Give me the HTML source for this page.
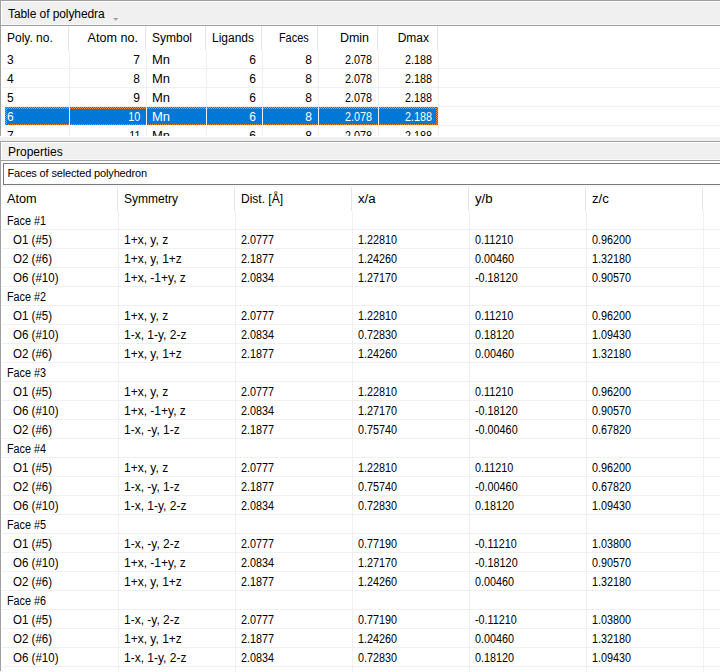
<!DOCTYPE html>
<html><head><meta charset="utf-8"><style>
html,body{margin:0;padding:0;width:720px;height:672px;overflow:hidden;background:#fff;}
body{position:relative;font-family:"Liberation Sans",sans-serif;font-size:12px;}
div{position:absolute;box-sizing:border-box;}
.t{line-height:19px;white-space:pre;font-size:12px;}
.s{line-height:19px;white-space:pre;font-size:11px;}
</style></head><body>

<div style="left:0px;top:0px;width:720px;height:136px;background:#fff;"></div>
<div style="left:0px;top:0px;width:720px;height:1px;background:#a0a0a0;"></div>
<div style="left:0px;top:0px;width:1px;height:136px;background:#a0a0a0;"></div>
<div style="left:1px;top:1px;width:719px;height:1px;background:#fff;"></div>
<div style="left:1px;top:1px;width:1px;height:24px;background:#fff;"></div>
<div style="left:2px;top:2px;width:718px;height:22px;background:#f0f0f0;"></div>
<div style="left:2px;top:24px;width:718px;height:1px;background:#f8f8f8;"></div>
<div style="left:1px;top:25px;width:719px;height:1px;background:#a0a0a0;"></div>
<div class="t" style="left:8px;top:5px;color:#000;letter-spacing:-0.08px;">Table of polyhedra</div>
<svg style="position:absolute;left:112px;top:17px" width="8" height="5"><path d="M1 1 L6.5 1 L3.75 3.75 Z" fill="#a0a0a0"/></svg>
<div style="left:68px;top:26px;width:1px;height:24px;background:#e5e5e5;"></div>
<div style="left:145px;top:26px;width:1px;height:24px;background:#e5e5e5;"></div>
<div style="left:205px;top:26px;width:1px;height:24px;background:#e5e5e5;"></div>
<div style="left:261px;top:26px;width:1px;height:24px;background:#e5e5e5;"></div>
<div style="left:317px;top:26px;width:1px;height:24px;background:#e5e5e5;"></div>
<div style="left:377px;top:26px;width:1px;height:24px;background:#e5e5e5;"></div>
<div style="left:437px;top:26px;width:1px;height:24px;background:#e5e5e5;"></div>
<div style="left:69px;top:50px;width:1px;height:86px;background:#f0f0f0;"></div>
<div style="left:146px;top:50px;width:1px;height:86px;background:#f0f0f0;"></div>
<div style="left:206px;top:50px;width:1px;height:86px;background:#f0f0f0;"></div>
<div style="left:262px;top:50px;width:1px;height:86px;background:#f0f0f0;"></div>
<div style="left:318px;top:50px;width:1px;height:86px;background:#f0f0f0;"></div>
<div style="left:378px;top:50px;width:1px;height:86px;background:#f0f0f0;"></div>
<div style="left:438px;top:50px;width:1px;height:86px;background:#f0f0f0;"></div>
<div style="left:2px;top:68px;width:718px;height:1px;background:#f0f0f0;"></div>
<div style="left:2px;top:87px;width:718px;height:1px;background:#f0f0f0;"></div>
<div style="left:2px;top:106px;width:718px;height:1px;background:#f0f0f0;"></div>
<div style="left:2px;top:125px;width:718px;height:1px;background:#f0f0f0;"></div>
<div class="t" style="left:7px;top:29px;color:#000;">Poly. no.</div>
<div class="t" style="right:582px;top:29px;color:#000;text-align:right;transform:scaleX(1.05);transform-origin:right center;">Atom no.</div>
<div class="t" style="left:152px;top:29px;color:#000;">Symbol</div>
<div class="t" style="right:466px;top:29px;color:#000;text-align:right;">Ligands</div>
<div class="t" style="right:411px;top:29px;color:#000;text-align:right;transform:scaleX(0.91);transform-origin:right center;">Faces</div>
<div class="t" style="right:351px;top:29px;color:#000;text-align:right;transform:scaleX(1.04);transform-origin:right center;">Dmin</div>
<div class="t" style="right:291px;top:29px;color:#000;text-align:right;">Dmax</div>
<div class="t" style="left:7px;top:51px;color:#000;">3</div>
<div class="t" style="right:580px;top:51px;color:#000;text-align:right;">7</div>
<div class="t" style="left:152px;top:51px;color:#000;transform:scaleX(1.08);transform-origin:left center;">Mn</div>
<div class="t" style="right:464px;top:51px;color:#000;text-align:right;">6</div>
<div class="t" style="right:408px;top:51px;color:#000;text-align:right;">8</div>
<div class="t" style="right:348px;top:51px;color:#000;text-align:right;transform:scaleX(0.9);transform-origin:right center;">2.078</div>
<div class="t" style="right:288px;top:51px;color:#000;text-align:right;transform:scaleX(0.9);transform-origin:right center;">2.188</div>
<div class="t" style="left:7px;top:70px;color:#000;">4</div>
<div class="t" style="right:580px;top:70px;color:#000;text-align:right;">8</div>
<div class="t" style="left:152px;top:70px;color:#000;transform:scaleX(1.08);transform-origin:left center;">Mn</div>
<div class="t" style="right:464px;top:70px;color:#000;text-align:right;">6</div>
<div class="t" style="right:408px;top:70px;color:#000;text-align:right;">8</div>
<div class="t" style="right:348px;top:70px;color:#000;text-align:right;transform:scaleX(0.9);transform-origin:right center;">2.078</div>
<div class="t" style="right:288px;top:70px;color:#000;text-align:right;transform:scaleX(0.9);transform-origin:right center;">2.188</div>
<div class="t" style="left:7px;top:89px;color:#000;">5</div>
<div class="t" style="right:580px;top:89px;color:#000;text-align:right;">9</div>
<div class="t" style="left:152px;top:89px;color:#000;transform:scaleX(1.08);transform-origin:left center;">Mn</div>
<div class="t" style="right:464px;top:89px;color:#000;text-align:right;">6</div>
<div class="t" style="right:408px;top:89px;color:#000;text-align:right;">8</div>
<div class="t" style="right:348px;top:89px;color:#000;text-align:right;transform:scaleX(0.9);transform-origin:right center;">2.078</div>
<div class="t" style="right:288px;top:89px;color:#000;text-align:right;transform:scaleX(0.9);transform-origin:right center;">2.188</div>
<div style="left:5px;top:107px;width:64px;height:18px;background:#0078d7;"></div>
<div style="left:70px;top:107px;width:76px;height:18px;background:#0078d7;"></div>
<div style="left:147px;top:107px;width:59px;height:18px;background:#0078d7;"></div>
<div style="left:207px;top:107px;width:55px;height:18px;background:#0078d7;"></div>
<div style="left:263px;top:107px;width:55px;height:18px;background:#0078d7;"></div>
<div style="left:319px;top:107px;width:59px;height:18px;background:#0078d7;"></div>
<div style="left:379px;top:107px;width:59px;height:18px;background:#0078d7;"></div>
<div style="left:5px;top:107px;width:64px;height:2px;background:#0078d7;background-image:repeating-conic-gradient(#ff8728 0 25%,#0078d7 0 50%);background-size:2px 2px;"></div>
<div style="left:5px;top:124px;width:64px;height:1px;background:#0078d7;background-image:repeating-conic-gradient(#ff8728 0 25%,#0078d7 0 50%);background-size:2px 2px;"></div>
<div style="left:70px;top:107px;width:76px;height:2px;background:#0078d7;background-image:repeating-conic-gradient(#ff8728 0 25%,#0078d7 0 50%);background-size:2px 2px;"></div>
<div style="left:70px;top:124px;width:76px;height:1px;background:#0078d7;background-image:repeating-conic-gradient(#ff8728 0 25%,#0078d7 0 50%);background-size:2px 2px;"></div>
<div style="left:147px;top:107px;width:59px;height:2px;background:#0078d7;background-image:repeating-conic-gradient(#ff8728 0 25%,#0078d7 0 50%);background-size:2px 2px;"></div>
<div style="left:147px;top:124px;width:59px;height:1px;background:#0078d7;background-image:repeating-conic-gradient(#ff8728 0 25%,#0078d7 0 50%);background-size:2px 2px;"></div>
<div style="left:207px;top:107px;width:55px;height:2px;background:#0078d7;background-image:repeating-conic-gradient(#ff8728 0 25%,#0078d7 0 50%);background-size:2px 2px;"></div>
<div style="left:207px;top:124px;width:55px;height:1px;background:#0078d7;background-image:repeating-conic-gradient(#ff8728 0 25%,#0078d7 0 50%);background-size:2px 2px;"></div>
<div style="left:263px;top:107px;width:55px;height:2px;background:#0078d7;background-image:repeating-conic-gradient(#ff8728 0 25%,#0078d7 0 50%);background-size:2px 2px;"></div>
<div style="left:263px;top:124px;width:55px;height:1px;background:#0078d7;background-image:repeating-conic-gradient(#ff8728 0 25%,#0078d7 0 50%);background-size:2px 2px;"></div>
<div style="left:319px;top:107px;width:59px;height:2px;background:#0078d7;background-image:repeating-conic-gradient(#ff8728 0 25%,#0078d7 0 50%);background-size:2px 2px;"></div>
<div style="left:319px;top:124px;width:59px;height:1px;background:#0078d7;background-image:repeating-conic-gradient(#ff8728 0 25%,#0078d7 0 50%);background-size:2px 2px;"></div>
<div style="left:379px;top:107px;width:59px;height:2px;background:#0078d7;background-image:repeating-conic-gradient(#ff8728 0 25%,#0078d7 0 50%);background-size:2px 2px;"></div>
<div style="left:379px;top:124px;width:59px;height:1px;background:#0078d7;background-image:repeating-conic-gradient(#ff8728 0 25%,#0078d7 0 50%);background-size:2px 2px;"></div>
<div style="left:5px;top:107px;width:2px;height:18px;background:#0078d7;background-image:repeating-conic-gradient(#ff8728 0 25%,#0078d7 0 50%);background-size:2px 2px;"></div>
<div style="left:436px;top:107px;width:2px;height:18px;background:#0078d7;background-image:repeating-conic-gradient(#ff8728 0 25%,#0078d7 0 50%);background-size:2px 2px;"></div>
<div class="t" style="left:7px;top:108px;color:#fff;">6</div>
<div class="t" style="right:580px;top:108px;color:#fff;text-align:right;transform:scaleX(0.9);transform-origin:right center;">10</div>
<div class="t" style="left:152px;top:108px;color:#fff;transform:scaleX(1.08);transform-origin:left center;">Mn</div>
<div class="t" style="right:464px;top:108px;color:#fff;text-align:right;">6</div>
<div class="t" style="right:408px;top:108px;color:#fff;text-align:right;">8</div>
<div class="t" style="right:348px;top:108px;color:#fff;text-align:right;transform:scaleX(0.9);transform-origin:right center;">2.078</div>
<div class="t" style="right:288px;top:108px;color:#fff;text-align:right;transform:scaleX(0.9);transform-origin:right center;">2.188</div>
<div class="t" style="left:7px;top:127px;color:#000;">7</div>
<div class="t" style="right:580px;top:127px;color:#000;text-align:right;transform:scaleX(0.9);transform-origin:right center;">11</div>
<div class="t" style="left:152px;top:127px;color:#000;transform:scaleX(1.08);transform-origin:left center;">Mn</div>
<div class="t" style="right:464px;top:127px;color:#000;text-align:right;">6</div>
<div class="t" style="right:408px;top:127px;color:#000;text-align:right;">8</div>
<div class="t" style="right:348px;top:127px;color:#000;text-align:right;transform:scaleX(0.9);transform-origin:right center;">2.078</div>
<div class="t" style="right:288px;top:127px;color:#000;text-align:right;transform:scaleX(0.9);transform-origin:right center;">2.188</div>
<div style="left:0px;top:136px;width:720px;height:1px;background:#fff;"></div>
<div style="left:0px;top:137px;width:720px;height:4px;background:#f0f0f0;"></div>
<div style="left:0px;top:141px;width:720px;height:1px;background:#a0a0a0;"></div>
<div style="left:0px;top:141px;width:1px;height:530px;background:#a0a0a0;"></div>
<div style="left:1px;top:142px;width:719px;height:1px;background:#fff;"></div>
<div style="left:1px;top:142px;width:1px;height:18px;background:#fff;"></div>
<div style="left:2px;top:143px;width:718px;height:16px;background:#f0f0f0;"></div>
<div style="left:2px;top:159px;width:718px;height:1px;background:#f8f8f8;"></div>
<div style="left:1px;top:160px;width:719px;height:1px;background:#a0a0a0;"></div>
<div class="t" style="left:8px;top:143px;color:#000;">Properties</div>
<div style="left:3px;top:163px;width:717px;height:22px;background:#fff;border:1px solid #7a7a7a;border-right:none;"></div>
<div class="s" style="left:7.5px;top:164px;color:#000;letter-spacing:-0.15px;">Faces of selected polyhedron</div>
<div style="left:1px;top:185px;width:719px;height:2px;background:#f8f8f8;"></div>
<div style="left:117px;top:187px;width:1px;height:24px;background:#e5e5e5;"></div>
<div style="left:234px;top:187px;width:1px;height:24px;background:#e5e5e5;"></div>
<div style="left:351px;top:187px;width:1px;height:24px;background:#e5e5e5;"></div>
<div style="left:468px;top:187px;width:1px;height:24px;background:#e5e5e5;"></div>
<div style="left:585px;top:187px;width:1px;height:24px;background:#e5e5e5;"></div>
<div style="left:702px;top:187px;width:1px;height:24px;background:#e5e5e5;"></div>
<div style="left:118px;top:211px;width:1px;height:461px;background:#f0f0f0;"></div>
<div style="left:235px;top:211px;width:1px;height:461px;background:#f0f0f0;"></div>
<div style="left:352px;top:211px;width:1px;height:461px;background:#f0f0f0;"></div>
<div style="left:469px;top:211px;width:1px;height:461px;background:#f0f0f0;"></div>
<div style="left:586px;top:211px;width:1px;height:461px;background:#f0f0f0;"></div>
<div style="left:703px;top:211px;width:1px;height:461px;background:#f0f0f0;"></div>
<div class="t" style="left:7px;top:190px;color:#000;transform:scaleX(1.06);transform-origin:left center;">Atom</div>
<div class="t" style="left:124px;top:190px;color:#000;">Symmetry</div>
<div class="t" style="left:241px;top:190px;color:#000;">Dist. [&#197;]</div>
<div class="t" style="left:358px;top:190px;color:#000;transform:scaleX(1.1);transform-origin:left center;">x/a</div>
<div class="t" style="left:475px;top:190px;color:#000;transform:scaleX(1.1);transform-origin:left center;">y/b</div>
<div class="t" style="left:592px;top:190px;color:#000;transform:scaleX(1.1);transform-origin:left center;">z/c</div>
<div style="left:2px;top:229px;width:718px;height:1px;background:#f0f0f0;"></div>
<div class="t" style="left:7px;top:212px;color:#000;transform:scaleX(0.9);transform-origin:left center;">Face #1</div>
<div style="left:2px;top:248px;width:718px;height:1px;background:#f0f0f0;"></div>
<div class="t" style="left:13px;top:231px;color:#000;transform:scaleX(0.96);transform-origin:left center;">O1 (#5)</div>
<div class="t" style="left:124px;top:231px;color:#000;">1+x, y, z</div>
<div class="t" style="left:241px;top:231px;color:#000;transform:scaleX(0.9);transform-origin:left center;">2.0777</div>
<div class="t" style="left:358px;top:231px;color:#000;transform:scaleX(0.9);transform-origin:left center;">1.22810</div>
<div class="t" style="left:475px;top:231px;color:#000;transform:scaleX(0.9);transform-origin:left center;">0.11210</div>
<div class="t" style="left:592px;top:231px;color:#000;transform:scaleX(0.9);transform-origin:left center;">0.96200</div>
<div style="left:2px;top:267px;width:718px;height:1px;background:#f0f0f0;"></div>
<div class="t" style="left:13px;top:250px;color:#000;transform:scaleX(0.96);transform-origin:left center;">O2 (#6)</div>
<div class="t" style="left:124px;top:250px;color:#000;">1+x, y, 1+z</div>
<div class="t" style="left:241px;top:250px;color:#000;transform:scaleX(0.9);transform-origin:left center;">2.1877</div>
<div class="t" style="left:358px;top:250px;color:#000;transform:scaleX(0.9);transform-origin:left center;">1.24260</div>
<div class="t" style="left:475px;top:250px;color:#000;transform:scaleX(0.9);transform-origin:left center;">0.00460</div>
<div class="t" style="left:592px;top:250px;color:#000;transform:scaleX(0.9);transform-origin:left center;">1.32180</div>
<div style="left:2px;top:286px;width:718px;height:1px;background:#f0f0f0;"></div>
<div class="t" style="left:13px;top:269px;color:#000;transform:scaleX(0.96);transform-origin:left center;">O6 (#10)</div>
<div class="t" style="left:124px;top:269px;color:#000;">1+x, -1+y, z</div>
<div class="t" style="left:241px;top:269px;color:#000;transform:scaleX(0.9);transform-origin:left center;">2.0834</div>
<div class="t" style="left:358px;top:269px;color:#000;transform:scaleX(0.9);transform-origin:left center;">1.27170</div>
<div class="t" style="left:475px;top:269px;color:#000;transform:scaleX(0.9);transform-origin:left center;">-0.18120</div>
<div class="t" style="left:592px;top:269px;color:#000;transform:scaleX(0.9);transform-origin:left center;">0.90570</div>
<div style="left:2px;top:305px;width:718px;height:1px;background:#f0f0f0;"></div>
<div class="t" style="left:7px;top:288px;color:#000;transform:scaleX(0.9);transform-origin:left center;">Face #2</div>
<div style="left:2px;top:324px;width:718px;height:1px;background:#f0f0f0;"></div>
<div class="t" style="left:13px;top:307px;color:#000;transform:scaleX(0.96);transform-origin:left center;">O1 (#5)</div>
<div class="t" style="left:124px;top:307px;color:#000;">1+x, y, z</div>
<div class="t" style="left:241px;top:307px;color:#000;transform:scaleX(0.9);transform-origin:left center;">2.0777</div>
<div class="t" style="left:358px;top:307px;color:#000;transform:scaleX(0.9);transform-origin:left center;">1.22810</div>
<div class="t" style="left:475px;top:307px;color:#000;transform:scaleX(0.9);transform-origin:left center;">0.11210</div>
<div class="t" style="left:592px;top:307px;color:#000;transform:scaleX(0.9);transform-origin:left center;">0.96200</div>
<div style="left:2px;top:343px;width:718px;height:1px;background:#f0f0f0;"></div>
<div class="t" style="left:13px;top:326px;color:#000;transform:scaleX(0.96);transform-origin:left center;">O6 (#10)</div>
<div class="t" style="left:124px;top:326px;color:#000;">1-x, 1-y, 2-z</div>
<div class="t" style="left:241px;top:326px;color:#000;transform:scaleX(0.9);transform-origin:left center;">2.0834</div>
<div class="t" style="left:358px;top:326px;color:#000;transform:scaleX(0.9);transform-origin:left center;">0.72830</div>
<div class="t" style="left:475px;top:326px;color:#000;transform:scaleX(0.9);transform-origin:left center;">0.18120</div>
<div class="t" style="left:592px;top:326px;color:#000;transform:scaleX(0.9);transform-origin:left center;">1.09430</div>
<div style="left:2px;top:362px;width:718px;height:1px;background:#f0f0f0;"></div>
<div class="t" style="left:13px;top:345px;color:#000;transform:scaleX(0.96);transform-origin:left center;">O2 (#6)</div>
<div class="t" style="left:124px;top:345px;color:#000;">1+x, y, 1+z</div>
<div class="t" style="left:241px;top:345px;color:#000;transform:scaleX(0.9);transform-origin:left center;">2.1877</div>
<div class="t" style="left:358px;top:345px;color:#000;transform:scaleX(0.9);transform-origin:left center;">1.24260</div>
<div class="t" style="left:475px;top:345px;color:#000;transform:scaleX(0.9);transform-origin:left center;">0.00460</div>
<div class="t" style="left:592px;top:345px;color:#000;transform:scaleX(0.9);transform-origin:left center;">1.32180</div>
<div style="left:2px;top:381px;width:718px;height:1px;background:#f0f0f0;"></div>
<div class="t" style="left:7px;top:364px;color:#000;transform:scaleX(0.9);transform-origin:left center;">Face #3</div>
<div style="left:2px;top:400px;width:718px;height:1px;background:#f0f0f0;"></div>
<div class="t" style="left:13px;top:383px;color:#000;transform:scaleX(0.96);transform-origin:left center;">O1 (#5)</div>
<div class="t" style="left:124px;top:383px;color:#000;">1+x, y, z</div>
<div class="t" style="left:241px;top:383px;color:#000;transform:scaleX(0.9);transform-origin:left center;">2.0777</div>
<div class="t" style="left:358px;top:383px;color:#000;transform:scaleX(0.9);transform-origin:left center;">1.22810</div>
<div class="t" style="left:475px;top:383px;color:#000;transform:scaleX(0.9);transform-origin:left center;">0.11210</div>
<div class="t" style="left:592px;top:383px;color:#000;transform:scaleX(0.9);transform-origin:left center;">0.96200</div>
<div style="left:2px;top:419px;width:718px;height:1px;background:#f0f0f0;"></div>
<div class="t" style="left:13px;top:402px;color:#000;transform:scaleX(0.96);transform-origin:left center;">O6 (#10)</div>
<div class="t" style="left:124px;top:402px;color:#000;">1+x, -1+y, z</div>
<div class="t" style="left:241px;top:402px;color:#000;transform:scaleX(0.9);transform-origin:left center;">2.0834</div>
<div class="t" style="left:358px;top:402px;color:#000;transform:scaleX(0.9);transform-origin:left center;">1.27170</div>
<div class="t" style="left:475px;top:402px;color:#000;transform:scaleX(0.9);transform-origin:left center;">-0.18120</div>
<div class="t" style="left:592px;top:402px;color:#000;transform:scaleX(0.9);transform-origin:left center;">0.90570</div>
<div style="left:2px;top:438px;width:718px;height:1px;background:#f0f0f0;"></div>
<div class="t" style="left:13px;top:421px;color:#000;transform:scaleX(0.96);transform-origin:left center;">O2 (#6)</div>
<div class="t" style="left:124px;top:421px;color:#000;">1-x, -y, 1-z</div>
<div class="t" style="left:241px;top:421px;color:#000;transform:scaleX(0.9);transform-origin:left center;">2.1877</div>
<div class="t" style="left:358px;top:421px;color:#000;transform:scaleX(0.9);transform-origin:left center;">0.75740</div>
<div class="t" style="left:475px;top:421px;color:#000;transform:scaleX(0.9);transform-origin:left center;">-0.00460</div>
<div class="t" style="left:592px;top:421px;color:#000;transform:scaleX(0.9);transform-origin:left center;">0.67820</div>
<div style="left:2px;top:457px;width:718px;height:1px;background:#f0f0f0;"></div>
<div class="t" style="left:7px;top:440px;color:#000;transform:scaleX(0.9);transform-origin:left center;">Face #4</div>
<div style="left:2px;top:476px;width:718px;height:1px;background:#f0f0f0;"></div>
<div class="t" style="left:13px;top:459px;color:#000;transform:scaleX(0.96);transform-origin:left center;">O1 (#5)</div>
<div class="t" style="left:124px;top:459px;color:#000;">1+x, y, z</div>
<div class="t" style="left:241px;top:459px;color:#000;transform:scaleX(0.9);transform-origin:left center;">2.0777</div>
<div class="t" style="left:358px;top:459px;color:#000;transform:scaleX(0.9);transform-origin:left center;">1.22810</div>
<div class="t" style="left:475px;top:459px;color:#000;transform:scaleX(0.9);transform-origin:left center;">0.11210</div>
<div class="t" style="left:592px;top:459px;color:#000;transform:scaleX(0.9);transform-origin:left center;">0.96200</div>
<div style="left:2px;top:495px;width:718px;height:1px;background:#f0f0f0;"></div>
<div class="t" style="left:13px;top:478px;color:#000;transform:scaleX(0.96);transform-origin:left center;">O2 (#6)</div>
<div class="t" style="left:124px;top:478px;color:#000;">1-x, -y, 1-z</div>
<div class="t" style="left:241px;top:478px;color:#000;transform:scaleX(0.9);transform-origin:left center;">2.1877</div>
<div class="t" style="left:358px;top:478px;color:#000;transform:scaleX(0.9);transform-origin:left center;">0.75740</div>
<div class="t" style="left:475px;top:478px;color:#000;transform:scaleX(0.9);transform-origin:left center;">-0.00460</div>
<div class="t" style="left:592px;top:478px;color:#000;transform:scaleX(0.9);transform-origin:left center;">0.67820</div>
<div style="left:2px;top:514px;width:718px;height:1px;background:#f0f0f0;"></div>
<div class="t" style="left:13px;top:497px;color:#000;transform:scaleX(0.96);transform-origin:left center;">O6 (#10)</div>
<div class="t" style="left:124px;top:497px;color:#000;">1-x, 1-y, 2-z</div>
<div class="t" style="left:241px;top:497px;color:#000;transform:scaleX(0.9);transform-origin:left center;">2.0834</div>
<div class="t" style="left:358px;top:497px;color:#000;transform:scaleX(0.9);transform-origin:left center;">0.72830</div>
<div class="t" style="left:475px;top:497px;color:#000;transform:scaleX(0.9);transform-origin:left center;">0.18120</div>
<div class="t" style="left:592px;top:497px;color:#000;transform:scaleX(0.9);transform-origin:left center;">1.09430</div>
<div style="left:2px;top:533px;width:718px;height:1px;background:#f0f0f0;"></div>
<div class="t" style="left:7px;top:516px;color:#000;transform:scaleX(0.9);transform-origin:left center;">Face #5</div>
<div style="left:2px;top:552px;width:718px;height:1px;background:#f0f0f0;"></div>
<div class="t" style="left:13px;top:535px;color:#000;transform:scaleX(0.96);transform-origin:left center;">O1 (#5)</div>
<div class="t" style="left:124px;top:535px;color:#000;">1-x, -y, 2-z</div>
<div class="t" style="left:241px;top:535px;color:#000;transform:scaleX(0.9);transform-origin:left center;">2.0777</div>
<div class="t" style="left:358px;top:535px;color:#000;transform:scaleX(0.9);transform-origin:left center;">0.77190</div>
<div class="t" style="left:475px;top:535px;color:#000;transform:scaleX(0.9);transform-origin:left center;">-0.11210</div>
<div class="t" style="left:592px;top:535px;color:#000;transform:scaleX(0.9);transform-origin:left center;">1.03800</div>
<div style="left:2px;top:571px;width:718px;height:1px;background:#f0f0f0;"></div>
<div class="t" style="left:13px;top:554px;color:#000;transform:scaleX(0.96);transform-origin:left center;">O6 (#10)</div>
<div class="t" style="left:124px;top:554px;color:#000;">1+x, -1+y, z</div>
<div class="t" style="left:241px;top:554px;color:#000;transform:scaleX(0.9);transform-origin:left center;">2.0834</div>
<div class="t" style="left:358px;top:554px;color:#000;transform:scaleX(0.9);transform-origin:left center;">1.27170</div>
<div class="t" style="left:475px;top:554px;color:#000;transform:scaleX(0.9);transform-origin:left center;">-0.18120</div>
<div class="t" style="left:592px;top:554px;color:#000;transform:scaleX(0.9);transform-origin:left center;">0.90570</div>
<div style="left:2px;top:590px;width:718px;height:1px;background:#f0f0f0;"></div>
<div class="t" style="left:13px;top:573px;color:#000;transform:scaleX(0.96);transform-origin:left center;">O2 (#6)</div>
<div class="t" style="left:124px;top:573px;color:#000;">1+x, y, 1+z</div>
<div class="t" style="left:241px;top:573px;color:#000;transform:scaleX(0.9);transform-origin:left center;">2.1877</div>
<div class="t" style="left:358px;top:573px;color:#000;transform:scaleX(0.9);transform-origin:left center;">1.24260</div>
<div class="t" style="left:475px;top:573px;color:#000;transform:scaleX(0.9);transform-origin:left center;">0.00460</div>
<div class="t" style="left:592px;top:573px;color:#000;transform:scaleX(0.9);transform-origin:left center;">1.32180</div>
<div style="left:2px;top:609px;width:718px;height:1px;background:#f0f0f0;"></div>
<div class="t" style="left:7px;top:592px;color:#000;transform:scaleX(0.9);transform-origin:left center;">Face #6</div>
<div style="left:2px;top:628px;width:718px;height:1px;background:#f0f0f0;"></div>
<div class="t" style="left:13px;top:611px;color:#000;transform:scaleX(0.96);transform-origin:left center;">O1 (#5)</div>
<div class="t" style="left:124px;top:611px;color:#000;">1-x, -y, 2-z</div>
<div class="t" style="left:241px;top:611px;color:#000;transform:scaleX(0.9);transform-origin:left center;">2.0777</div>
<div class="t" style="left:358px;top:611px;color:#000;transform:scaleX(0.9);transform-origin:left center;">0.77190</div>
<div class="t" style="left:475px;top:611px;color:#000;transform:scaleX(0.9);transform-origin:left center;">-0.11210</div>
<div class="t" style="left:592px;top:611px;color:#000;transform:scaleX(0.9);transform-origin:left center;">1.03800</div>
<div style="left:2px;top:647px;width:718px;height:1px;background:#f0f0f0;"></div>
<div class="t" style="left:13px;top:630px;color:#000;transform:scaleX(0.96);transform-origin:left center;">O2 (#6)</div>
<div class="t" style="left:124px;top:630px;color:#000;">1+x, y, 1+z</div>
<div class="t" style="left:241px;top:630px;color:#000;transform:scaleX(0.9);transform-origin:left center;">2.1877</div>
<div class="t" style="left:358px;top:630px;color:#000;transform:scaleX(0.9);transform-origin:left center;">1.24260</div>
<div class="t" style="left:475px;top:630px;color:#000;transform:scaleX(0.9);transform-origin:left center;">0.00460</div>
<div class="t" style="left:592px;top:630px;color:#000;transform:scaleX(0.9);transform-origin:left center;">1.32180</div>
<div style="left:2px;top:666px;width:718px;height:1px;background:#f0f0f0;"></div>
<div class="t" style="left:13px;top:649px;color:#000;transform:scaleX(0.96);transform-origin:left center;">O6 (#10)</div>
<div class="t" style="left:124px;top:649px;color:#000;">1-x, 1-y, 2-z</div>
<div class="t" style="left:241px;top:649px;color:#000;transform:scaleX(0.9);transform-origin:left center;">2.0834</div>
<div class="t" style="left:358px;top:649px;color:#000;transform:scaleX(0.9);transform-origin:left center;">0.72830</div>
<div class="t" style="left:475px;top:649px;color:#000;transform:scaleX(0.9);transform-origin:left center;">0.18120</div>
<div class="t" style="left:592px;top:649px;color:#000;transform:scaleX(0.9);transform-origin:left center;">1.09430</div>
</body></html>
